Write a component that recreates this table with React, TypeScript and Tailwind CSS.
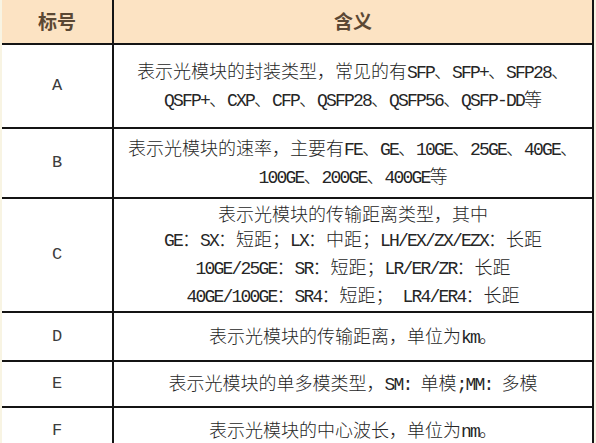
import React from "react";

type Row = { key: string; h: string; lines: string[] };

const rows: Row[] = [
  {
    key: "A",
    h: "h-[82px]",
    lines: [
      "表示光模块的封装类型，常见的有SFP、SFP+、SFP28、",
      "QSFP+、CXP、CFP、QSFP28、QSFP56、QSFP-DD等",
    ],
  },
  {
    key: "B",
    h: "h-[68px]",
    lines: ["表示光模块的速率，主要有FE、GE、10GE、25GE、40GE、", "100GE、200GE、400GE等"],
  },
  {
    key: "C",
    h: "h-[112px]",
    lines: [
      "表示光模块的传输距离类型，其中",
      "GE：SX：短距；LX：中距；LH/EX/ZX/EZX：长距",
      "10GE/25GE：SR：短距；LR/ER/ZR：长距",
      "40GE/100GE：SR4：短距； LR4/ER4：长距",
    ],
  },
  { key: "D", h: "h-[47px]", lines: ["表示光模块的传输距离，单位为km。"] },
  { key: "E", h: "h-[44px]", lines: ["表示光模块的单多模类型，SM: 单模;MM: 多模"] },
  { key: "F", h: "h-[46px]", lines: ["表示光模块的中心波长，单位为nm。"] },
];

// latin runs get a narrow mono face so they sit at half the CJK width
function Mixed({ text }: { text: string }) {
  const parts = text.split(/([A-Za-z0-9+\-/:; ]+)/);
  return (
    <>
      {parts.map((p, i) =>
        i % 2 === 1 ? (
          <span key={i} className="font-['Liberation_Mono',monospace] font-normal tracking-[-1.8px]">
            {p}
          </span>
        ) : (
          <React.Fragment key={i}>{p}</React.Fragment>
        )
      )}
    </>
  );
}

export default function App() {
  return (
    <div className="w-[596px] h-[443px] overflow-hidden bg-[#f8f4e3] pl-[2px]">
      <div className="w-[592px] border-r-2 border-[#141414] bg-white">
        <div className="flex h-[45px] border-b-2 border-[#141414] bg-[#fce3c3] font-['Noto_Sans_CJK_SC',sans-serif] text-[19px] font-bold text-[#5b4834]">
          <div className="flex w-[112px] items-center justify-center border-r-2 border-[#141414]">标号</div>
          <div className="flex flex-1 items-center justify-center">含义</div>
        </div>

        {rows.map((row) => (
          <div key={row.key} className={`flex border-b-2 border-[#141414] ${row.h} box-content`}>
            <div className="flex w-[110px] box-content items-center justify-center border-r-2 border-[#141414] font-['Liberation_Mono',monospace] text-[17px] text-[#3c3c3c]">
              {row.key}
            </div>
            <div className="flex flex-1 flex-col items-center justify-center font-['Noto_Sans_CJK_SC',sans-serif] text-[18px] font-light leading-[25px] text-[#262626] whitespace-nowrap">
              {row.lines.map((l, i) => (
                <div key={i}>
                  <Mixed text={l} />
                </div>
              ))}
            </div>
          </div>
        ))}
      </div>
    </div>
  );
}
